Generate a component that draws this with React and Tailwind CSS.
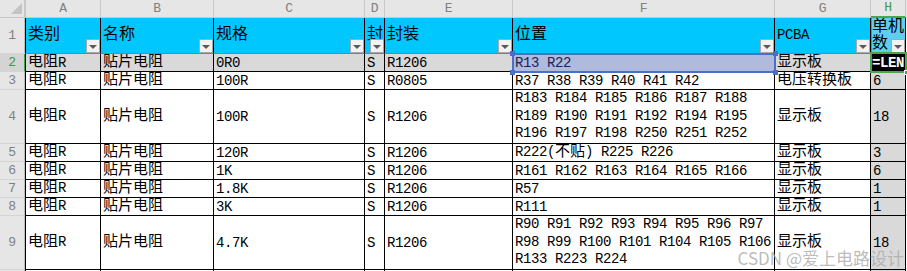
// WPS sheet view — resistor BOM with filters
import { clsx } from 'clsx'

const widths = ['w-[76px]', 'w-[113px]', 'w-[151px]', 'w-[20px]', 'w-[128px]', 'w-[262px]', 'w-[96px]', 'w-[35px]']
const letters = ['A', 'B', 'C', 'D', 'E', 'F', 'G', 'H']
const heads = ['类别', '名称', '规格', '封', '封装', '位置', 'PCBA', '单机数']

const rows = [
  { n: 3, cells: ['电阻R', '贴片电阻', '100R', 'S', 'R0805', ['R37 R38 R39 R40 R41 R42'], '电压转换板', '6'] },
  { n: 4, tall: true, cells: ['电阻R', '贴片电阻', '100R', 'S', 'R1206', ['R183 R184 R185 R186 R187 R188', 'R189 R190 R191 R192 R194 R195', 'R196 R197 R198 R250 R251 R252'], '显示板', '18'] },
  { n: 5, cells: ['电阻R', '贴片电阻', '120R', 'S', 'R1206', ['R222(不贴) R225 R226'], '显示板', '3'] },
  { n: 6, cells: ['电阻R', '贴片电阻', '1K', 'S', 'R1206', ['R161 R162 R163 R164 R165 R166'], '显示板', '6'] },
  { n: 7, cells: ['电阻R', '贴片电阻', '1.8K', 'S', 'R1206', ['R57'], '显示板', '1'] },
  { n: 8, cells: ['电阻R', '贴片电阻', '3K', 'S', 'R1206', ['R111'], '显示板', '1'] },
  { n: 9, tall: true, cells: ['电阻R', '贴片电阻', '4.7K', 'S', 'R1206', ['R90 R91 R92 R93 R94 R95 R96 R97', 'R98 R99 R100 R101 R104 R105 R106', 'R133 R223 R224'], '显示板', '18'] },
]

function Txt({ s, big }) {
  return s.split(/([\u3000-\u9fff\uff00-\uffef]+)/).map((p, i) =>
    i % 2 ? (
      <span key={i} lang="zh-CN" className={big ? 'text-[16px] tracking-normal' : 'text-[15px] tracking-normal'}>{p}</span>
    ) : p,
  )
}

function FilterBtn() {
  return (
    <div className="absolute right-0 bottom-0 w-[14px] h-[14px] bg-[#f2f2f2] border border-[#a8a8a8] flex items-center justify-center">
      <div className="w-0 h-0 border-l-[4px] border-r-[4px] border-t-[4px] border-l-transparent border-r-transparent border-t-[#595959] mt-[1px]" />
    </div>
  )
}

function RowHead({ n, active }) {
  return (
    <div
      className={clsx(
        'w-[25px] shrink-0 flex items-center justify-center border-r border-b border-b-[#d4d4d4] text-[13px]',
        active ? 'bg-[#d4d4d4] text-[#3c9a3c] border-r-[#4aa64a]' : 'bg-[#e6e6e6] text-[#808080] border-r-[#bdbdbd]',
      )}
    >
      {n}
    </div>
  )
}

export default function App() {
  return (
    <div lang="zh-CN" className="relative w-[907px] h-[271px] overflow-hidden bg-white text-black font-['Liberation_Mono','Noto_Sans_CJK_SC',monospace] text-[14px] tracking-[-0.4px] leading-[18px]">
      {/* column letters */}
      <div className="flex h-[18px]">
        <div className="w-[25px] shrink-0 relative border-r border-b border-[#c8c8c8] bg-[#e6e6e6]">
          <svg className="absolute right-[2px] bottom-[3px]" width="11" height="11" viewBox="0 0 11 11">
            <polygon points="0,11 11,0 11,11" fill="#c4c4c4" />
          </svg>
        </div>
        {letters.map((l, i) => (
          <div
            key={l}
            className={clsx(
              'shrink-0 flex items-center justify-center border-r border-b border-[#c8c8c8] bg-[#e6e6e6] text-[13px]',
              i === 0 && 'border-l',
              widths[i],
              l === 'H' ? 'text-[#3c9a3c] border-b-2 border-b-[#4aa64a]' : 'text-[#808080]',
            )}
          >
            {l}
          </div>
        ))}
        <div className="flex-1 border-b border-[#c8c8c8] bg-[#e6e6e6]" />
      </div>

      {/* header row */}
      <div className="flex h-[36px]">
        <RowHead n={1} />
        {heads.map((h, i) => (
          <div
            key={h}
            className={clsx(
              'relative shrink-0 flex items-center overflow-hidden border-r border-b border-black border-b-[#4aa64a] leading-[17px]',
              i === 0 && 'border-l',
              widths[i],
              i === 7 ? 'bg-[#5ccff3] pl-[1px]' : 'bg-[#00c8ff] pl-[2px]',
            )}
          >
            <div className="relative">
              <Txt s={h} big />
            </div>
            <FilterBtn />
            {i === 7 && <div className="absolute left-0 top-0 bottom-0 w-[1px] bg-[#4aa64a]" />}
          </div>
        ))}
        <div className="flex-1 border-b border-[#d4d4d4]" />
      </div>

      {/* row 2: active row */}
      <div className="flex h-[18px]">
        <RowHead n={2} active />
        {['电阻R', '贴片电阻', '0R0', 'S', 'R1206'].map((c, i) => (
          <div
            key={i}
            className={clsx('shrink-0 flex items-center border-r border-b border-black bg-[#d9d9d9] pl-[2px]', i === 0 && 'border-l', widths[i])}
          >
            <Txt s={c} />
          </div>
        ))}
        <div className="relative shrink-0 flex items-center border-r border-b border-black bg-[#afbadc] pl-[2px] text-[#1c2550] w-[262px]">
          R13 R22
          <div className="absolute left-[-1px] top-[-1px] right-[-2px] bottom-[-2px] border-2 border-[#4a6fc8]">
            <div className="absolute left-[-4px] top-[-4px] w-[5px] h-[5px] bg-[#4a6fc8]" />
            <div className="absolute right-[-4px] top-[-4px] w-[5px] h-[5px] bg-[#4a6fc8]" />
            <div className="absolute left-[-4px] bottom-[-4px] w-[5px] h-[5px] bg-[#4a6fc8]" />
            <div className="absolute right-[-4px] bottom-[-4px] w-[5px] h-[5px] bg-[#4a6fc8]" />
          </div>
        </div>
        <div className="shrink-0 flex items-center border-r border-b border-black bg-[#d9d9d9] pl-[2px] w-[96px]">
          <Txt s="显示板" />
        </div>
        <div className="relative shrink-0 flex items-center border-r border-b border-black bg-black text-white font-bold pl-[1px] w-[35px] whitespace-nowrap">
          <span className="overflow-hidden">=LEN</span>
          <div className="absolute left-[-1px] top-[-2px] right-[-2px] bottom-[-2px] border-2 border-[#4aa64a]">
            <div className="absolute right-[-4px] bottom-[-4px] w-[5px] h-[5px] bg-[#4aa64a] border border-white" />
          </div>
        </div>
        <div className="flex-1 border-b border-[#d4d4d4]" />
      </div>

      {/* data rows */}
      {rows.map((r) => (
        <div key={r.n} className={clsx('flex', r.tall ? 'h-[54px]' : 'h-[18px]')}>
          <RowHead n={r.n} />
          {r.cells.map((c, i) => (
            <div
              key={i}
              className={clsx(
                'shrink-0 flex items-center border-r border-b border-black pl-[2px]',
                i === 0 && 'border-l',
                widths[i],
                i === 7 ? 'bg-[#d9d9d9]' : 'bg-white',
              )}
            >
              {Array.isArray(c) ? (
                <div className={clsx('whitespace-nowrap', c.length > 1 && 'leading-[17.6px]')}>
                  {c.map((line, k) => (
                    <div key={k}>
                      <Txt s={line} />
                    </div>
                  ))}
                </div>
              ) : (
                <div className="whitespace-nowrap">
                  <Txt s={c} />
                </div>
              )}
            </div>
          ))}
          <div className="flex-1 border-b border-[#d4d4d4]" />
        </div>
      ))}

      {/* row 10, cut off at the window edge */}
      <div className="flex h-[18px]">
        <div className="w-[25px] shrink-0 border-r border-[#bdbdbd] bg-[#e6e6e6]" />
        {widths.map((w, i) => (
          <div key={i} className={clsx('shrink-0 border-r border-black', i === 0 && 'border-l', w, i === 7 ? 'bg-[#d9d9d9]' : 'bg-white')} />
        ))}
      </div>

      <div className="absolute right-[3px] bottom-[3px] text-[17px] leading-[20px] tracking-normal font-['Noto_Sans_CJK_SC',sans-serif] text-[rgba(170,170,170,0.8)] whitespace-nowrap">
        CSDN @爱上电路设计
      </div>
    </div>
  )
}
